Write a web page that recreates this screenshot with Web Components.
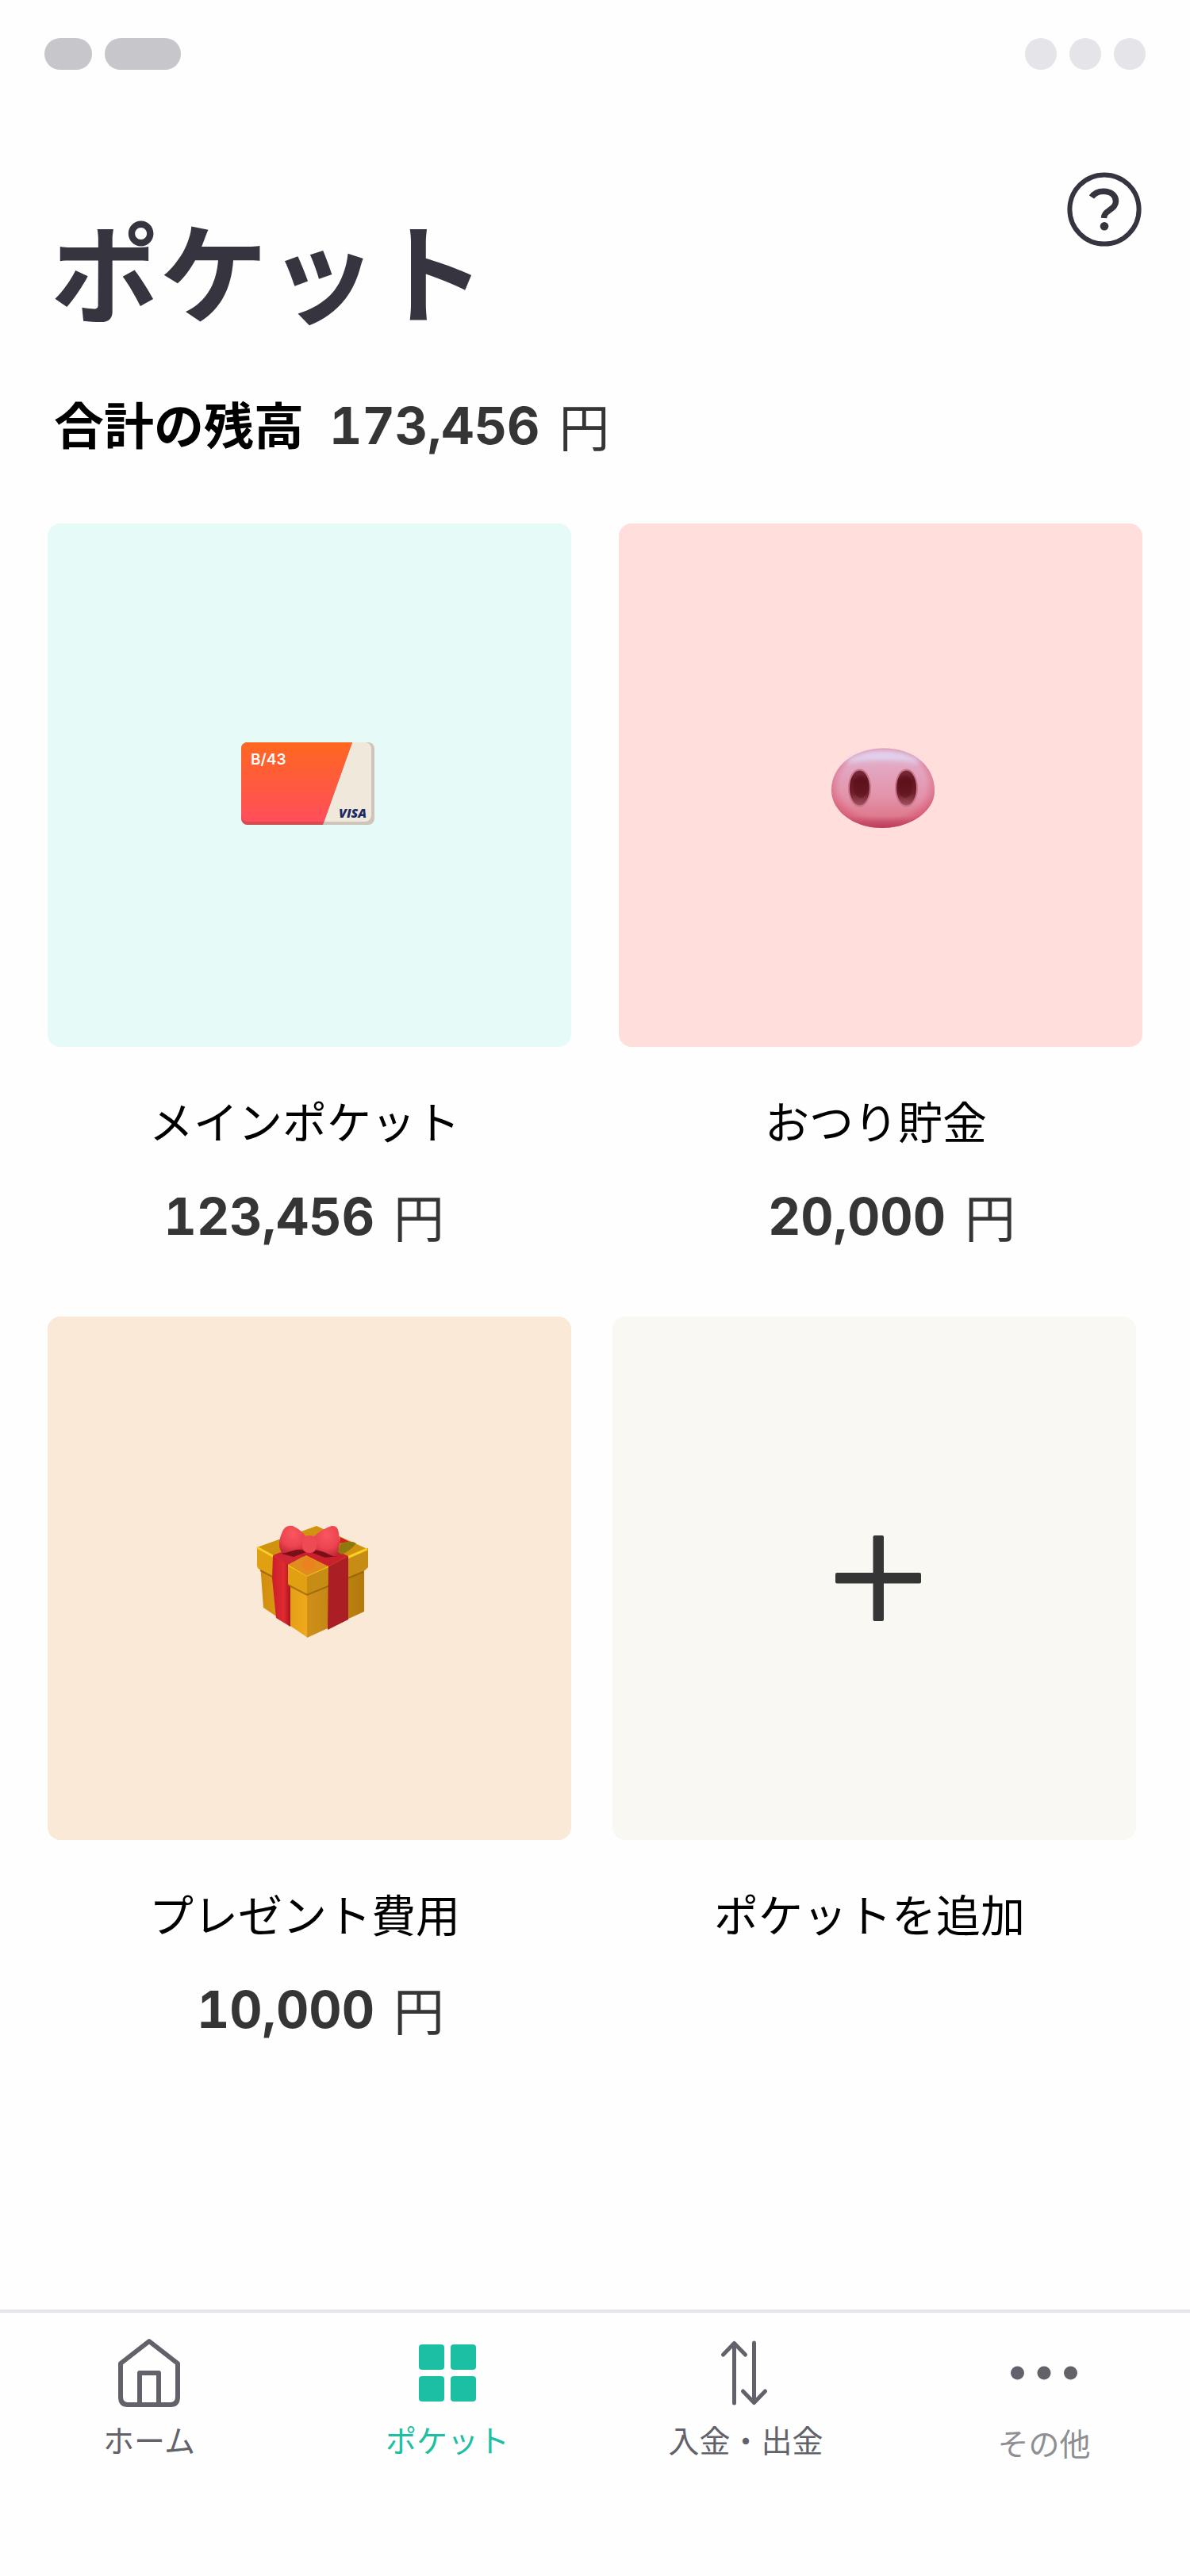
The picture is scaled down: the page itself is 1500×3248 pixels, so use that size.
<!DOCTYPE html>
<html lang="ja">
<head>
<meta charset="utf-8">
<meta name="viewport" content="width=device-width, initial-scale=1">
<title>ポケット</title>
<style>
  body { margin: 0; background: #fefefe; font-family: Inter, "Noto Sans CJK JP", sans-serif; color: #000; }
</style>
</head>
<body>
<pocket-app></pocket-app>

<template id="t-app">
  <style>
    :host { display: flex; flex-direction: column; min-height: 100vh; }
    main { flex: 1; }
    header { display: flex; justify-content: space-between; align-items: flex-start; padding: 129px 61px 0 64px; }
    h1 { margin: 51px 0 0; font-size: 137px; line-height: 160px; font-weight: 700; color: #35343f; }
    .help { border: 0; padding: 0; background: none; width: 94px; height: 94px; display: block; }
    .help svg { display: block; }
    .total { display: flex; align-items: center; gap: 32px; padding: 69px 68px 83px; }
    h2 { margin: 0; font-size: 63px; line-height: 80px; font-weight: 700; }
    .row { display: flex; gap: 60px; padding: 0 60px 86px; }
    .row.add { gap: 52px; padding: 0 68px 86px 60px; }
    .row > * { flex: 1; }
  </style>
  <status-bar></status-bar>
  <main>
    <header>
      <h1>ポケット</h1>
      <button class="help" type="button" aria-label="ヘルプ">
        <svg width="94" height="94" viewBox="0 0 94 94" fill="none" stroke="#35343f">
          <circle cx="47" cy="47" r="43.6" stroke-width="6"/>
          <path d="M31 31.5C34 27 38.500 24.200 46 24.200C56 24.200 61.500 30 61.500 36.500C61.500 42 58.500 44.500 53.500 48C48.500 51.500 46.700 53.500 46.500 58" stroke-width="7.5"/>
          <circle cx="47" cy="68.300" r="5.300" fill="#35343f" stroke="none"/>
        </svg>
      </button>
    </header>
    <section class="total">
      <h2>合計の残高</h2>
      <yen-amount>173,456</yen-amount>
    </section>
    <div class="row">
      <pocket-card label="メインポケット" amount="123,456" style="--tile:#e6faf8">
        <svg viewBox="0 0 660 660" aria-hidden="true">
          <defs>
            <linearGradient id="o" x1="0" y1="0" x2="0" y2="1"><stop offset="0" stop-color="#ff6720"/><stop offset="1" stop-color="#ff4e5b"/></linearGradient>
            <clipPath id="cc"><rect x="244" y="276" width="168" height="104" rx="8"/></clipPath>
          </defs>
          <g clip-path="url(#cc)">
            <rect x="244" y="276" width="168" height="104" fill="#cdc5ba"/>
            <path d="M340 276H400a8 8 0 0 1 8 8V368a8 8 0 0 1-8 8H340z" fill="#f0e9db"/>
            <path d="M244 276H384L347 380H244z" fill="#d94a50"/>
            <path d="M244 276H384L348.400 376H252a8 8 0 0 1-8-8z" fill="url(#o)"/>
          </g>
          <text x="256" y="303.500" font-family="Inter, sans-serif" font-weight="600" font-size="19" fill="#fff">B/43</text>
          <text x="367" y="371" font-family="'Open Sans', sans-serif" font-weight="800" font-style="italic" font-size="16" fill="#1b2a63">VISA</text>
        </svg>
      </pocket-card>
      <pocket-card label="おつり貯金" amount="20,000" style="--tile:#ffdedc">
        <svg viewBox="0 0 660 660" aria-hidden="true">
          <defs>
            <linearGradient id="p" x1="0" y1="0" x2="0" y2="1"><stop offset="0" stop-color="#e0b4d0"/><stop offset=".25" stop-color="#e3a6c1"/><stop offset=".6" stop-color="#e394ab"/><stop offset=".85" stop-color="#de7a8f"/><stop offset="1" stop-color="#a8304f"/></linearGradient>
            <radialGradient id="pe" cx=".5" cy=".46" r=".54"><stop offset=".76" stop-color="#d8506c" stop-opacity="0"/><stop offset="1" stop-color="#cf4763" stop-opacity=".6"/></radialGradient>
            <linearGradient id="n" x1="0" y1="0" x2="0" y2="1"><stop offset="0" stop-color="#7d2c3d"/><stop offset=".3" stop-color="#64151f"/><stop offset=".65" stop-color="#701e2a"/><stop offset="1" stop-color="#a65564"/></linearGradient>
            <filter id="b" x="-20%" y="-40%" width="140%" height="180%"><feGaussianBlur stdDeviation="3"/></filter>
          </defs>
          <path d="M334 283.500C372 283.500 398 306 398 337C398 364 366 384 332 384C298 384 268 364 268 336C268 306 296 283.500 334 283.500z" fill="url(#p)"/>
          <path d="M334 283.500C372 283.500 398 306 398 337C398 364 366 384 332 384C298 384 268 364 268 336C268 306 296 283.500 334 283.500z" fill="url(#pe)"/>
          <path d="M288 301C306 286 358 286 378 301C360 295 306 295 288 301z" fill="#e3d9f4" stroke="#e0d2ee" stroke-width="4" filter="url(#b)"/>
          <g fill="url(#n)" stroke="#c8768c" stroke-width="2">
            <ellipse cx="303.500" cy="333.500" rx="13.500" ry="23"/><ellipse cx="362.500" cy="333.500" rx="13.500" ry="23"/>
          </g>
          <g fill="#4f0b14" opacity=".35"><ellipse cx="305" cy="332" rx="9" ry="14"/><ellipse cx="361" cy="332" rx="9" ry="14"/></g>
        </svg>
      </pocket-card>
    </div>
    <div class="row add">
      <pocket-card label="プレゼント費用" amount="10,000" style="--tile:#fae9d7">
        <svg viewBox="0 0 660 660" aria-hidden="true">
          <defs>
            <linearGradient id="g1" x1="0" y1="0" x2="1" y2="0"><stop offset="0" stop-color="#cf8d10"/><stop offset="1" stop-color="#f0aa1c"/></linearGradient>
            <linearGradient id="g2" x1="0" y1="0" x2="1" y2="0"><stop offset="0" stop-color="#d0901a"/><stop offset="1" stop-color="#b27a0c"/></linearGradient>
            <radialGradient id="bow" cx=".5" cy=".3" r=".75"><stop offset="0" stop-color="#f9575e"/><stop offset=".6" stop-color="#ec4450"/><stop offset="1" stop-color="#c22836"/></radialGradient>
            <linearGradient id="r1" x1="0" y1="0" x2="1" y2="0"><stop offset="0" stop-color="#c91f2c"/><stop offset=".65" stop-color="#e02a30"/><stop offset="1" stop-color="#a81420"/></linearGradient>
          </defs>
          <g transform="translate(240 240)">
            <path d="M28 72L88 98V165L32 127z" fill="url(#g1)"/>
            <path d="M87 98L159 76V132L87 165z" fill="url(#g2)"/>
            <path d="M24 51L99 24L163 53L87 88z" fill="#d0920f"/>
            <path d="M24 51L87 86V110L27 79Q24 77 24 74z" fill="#e0a012"/>
            <path d="M87 86L164 52V76L160 80L87 110z" fill="#c78c14"/>
            <path d="M24 51L87 86L163 53" fill="none" stroke="#f8cf22" stroke-width="3" stroke-linejoin="round"/>
            <path d="M28 80L87 111L158 82" fill="none" stroke="#8f5d08" stroke-width="2" opacity=".7"/>
            <path d="M44 61L63 72V98L66 101V151L48 140L43 90z" fill="url(#r1)"/>
            <path d="M44 61L90 43L105 50L63 73z" fill="#cf2535"/>
            <path d="M90 55L78 61L114 75L139 62L100 45z" fill="#c9202b"/>
            <path d="M114 75L139 62V142L113 155z" fill="#ab1e24"/>
            <path d="M63 73L86 61L114 75L87 87z" fill="#e08c1e"/>
            <circle cx="89" cy="72" r="8" fill="#f47a1c" opacity=".6"/>
            <path d="M129 38L140 44L128 46z" fill="#d41f28"/>
            <path d="M129 47Q142 41 149 46Q140 57 130 60L126 57z" fill="#8e780f"/>
            <path d="M55 59Q70 52 84 55L95 54Q112 57 125 62L110 64L89 56L70 63z" fill="#7b0f18"/>
            <path d="M54 56Q49 46 56 31Q60 22 69 24Q80 29 86 38V52Q70 54 60 58Q56 59 54 56z" fill="url(#bow)"/>
            <path d="M95 38Q105 28 118 24Q126 23 127 33Q130 48 125 60Q123 64 117 61Q106 55 95 53z" fill="url(#bow)"/>
            <rect x="81" y="36" width="18" height="22" rx="8" fill="#ec4a55"/>
          </g>
        </svg>
      </pocket-card>
      <pocket-card label="ポケットを追加" style="--tile:#f9f8f3">
        <svg viewBox="0 0 660 660" fill="#353535" aria-hidden="true">
          <rect x="328.500" y="276" width="13.500" height="108" rx="2"/><rect x="281" y="323" width="108" height="13.500" rx="2"/>
        </svg>
      </pocket-card>
    </div>
  </main>
  <tab-bar></tab-bar>
</template>

<template id="t-status">
  <style>
    :host { display: flex; justify-content: space-between; padding: 48px 56px 0; }
    div { display: flex; gap: 16px; }
    i { display: block; width: 40px; height: 40px; border-radius: 20px; background: #e5e4e9; }
    .a { width: 60px; background: #c7c6cb; }
    .b { width: 96px; background: #c7c6cb; }
  </style>
  <div><i class="a"></i><i class="b"></i></div>
  <div><i></i><i></i><i></i></div>
</template>

<template id="t-yen">
  <style>
    :host { display: inline-flex; align-items: flex-start; gap: 24px; line-height: 80px; font-size: 64px; color: #353535; }
    b { font-weight: 700; font-variant-numeric: tabular-nums; }
    span { font-family: "Noto Sans CJK JP", sans-serif; font-weight: 400; line-height: 76px; }
  </style>
  <b><slot></slot></b><span>円</span>
</template>

<template id="t-card">
  <style>
    :host { display: block; min-width: 0; }
    button { display: block; width: 100%; padding: 0; border: 0; background: none; font: inherit; color: inherit; }
    .tile { display: block; aspect-ratio: 1; border-radius: 16px; background: var(--tile); overflow: hidden; }
    ::slotted(svg) { display: block; width: 100%; height: 100%; }
    .label { display: block; margin-top: 56px; padding-right: 12px; font-size: 56px; line-height: 80px; text-align: center; }
    .amount { display: flex; justify-content: flex-end; margin-top: 38px; padding-right: 160px; }
  </style>
  <button type="button">
    <span class="tile"><slot></slot></span>
    <span class="label"></span>
  </button>
</template>

<template id="t-tabs">
  <style>
    :host { display: block; border-top: 4px solid #e5e4ea; height: 332px; overflow: hidden; }
    nav { display: grid; grid-template-columns: repeat(4, 1fr); margin-right: -4px; padding-top: 28px; }
  </style>
  <nav aria-label="メイン">
    <tab-item label="ホーム">
      <svg width="96" height="96" viewBox="0 0 96 96" fill="none" stroke="#62626b" stroke-width="6">
        <path d="M12 36L48 8L84 36V78Q84 88 75 88H21Q12 88 12 78z" stroke-linejoin="round"/><path d="M36 88V48H60V88" stroke-linejoin="round"/>
      </svg>
    </tab-item>
    <tab-item label="ポケット" style="--tint:#1dbfa3" current>
      <svg width="96" height="96" viewBox="0 0 96 96" fill="#1dbfa3">
        <rect x="12" y="12" width="32" height="32" rx="4"/><rect x="52" y="12" width="32" height="32" rx="4"/><rect x="12" y="52" width="32" height="32" rx="4"/><rect x="52" y="52" width="32" height="32" rx="4"/>
      </svg>
    </tab-item>
    <tab-item label="入金・出金">
      <svg width="96" height="96" viewBox="0 0 96 96" fill="none" stroke="#62626b" stroke-width="5" stroke-linecap="round" stroke-linejoin="round">
        <path d="M33.500 86V11M19.500 25L33.500 10.500L47.500 25M58.500 10V85M44.500 71L58.500 85.500L72.500 71"/>
      </svg>
    </tab-item>
    <tab-item label="その他" style="--tint:#8e8e93;--gap:14px">
      <svg width="96" height="96" viewBox="0 0 96 96" fill="#62626b">
        <circle cx="14.500" cy="48" r="8.500"/><circle cx="48" cy="48" r="8.500"/><circle cx="81.500" cy="48" r="8.500"/>
      </svg>
    </tab-item>
  </nav>
</template>

<template id="t-tab">
  <style>
    :host { display: block; }
    a { display: flex; flex-direction: column; align-items: center; gap: var(--gap, 10px); text-decoration: none; color: var(--tint, #62626b); font-size: 39px; line-height: 56px; white-space: nowrap; }
    ::slotted(svg) { display: block; }
  </style>
  <a href="#"><slot></slot><span></span></a>
</template>

<script>
  class TemplateElement extends HTMLElement {
    constructor() {
      super();
      this.attachShadow({ mode: "open" })
        .append(document.getElementById(this.constructor.template).content.cloneNode(true));
    }
  }
  customElements.define("status-bar", class extends TemplateElement { static template = "t-status"; });
  customElements.define("yen-amount", class extends TemplateElement { static template = "t-yen"; });
  customElements.define("pocket-card", class extends TemplateElement {
    static template = "t-card";
    connectedCallback() {
      this.shadowRoot.querySelector(".label").textContent = this.getAttribute("label");
      const amount = this.getAttribute("amount");
      if (amount && !this.shadowRoot.querySelector(".amount")) {
        const line = document.createElement("span");
        line.className = "amount";
        const yen = document.createElement("yen-amount");
        yen.textContent = amount;
        line.append(yen);
        this.shadowRoot.querySelector("button").append(line);
      }
    }
  });
  customElements.define("tab-item", class extends TemplateElement {
    static template = "t-tab";
    connectedCallback() {
      this.shadowRoot.querySelector("span").textContent = this.getAttribute("label");
      if (this.hasAttribute("current")) this.shadowRoot.querySelector("a").setAttribute("aria-current", "page");
    }
  });
  customElements.define("tab-bar", class extends TemplateElement { static template = "t-tabs"; });
  customElements.define("pocket-app", class extends TemplateElement { static template = "t-app"; });
</script>
</body>
</html>
